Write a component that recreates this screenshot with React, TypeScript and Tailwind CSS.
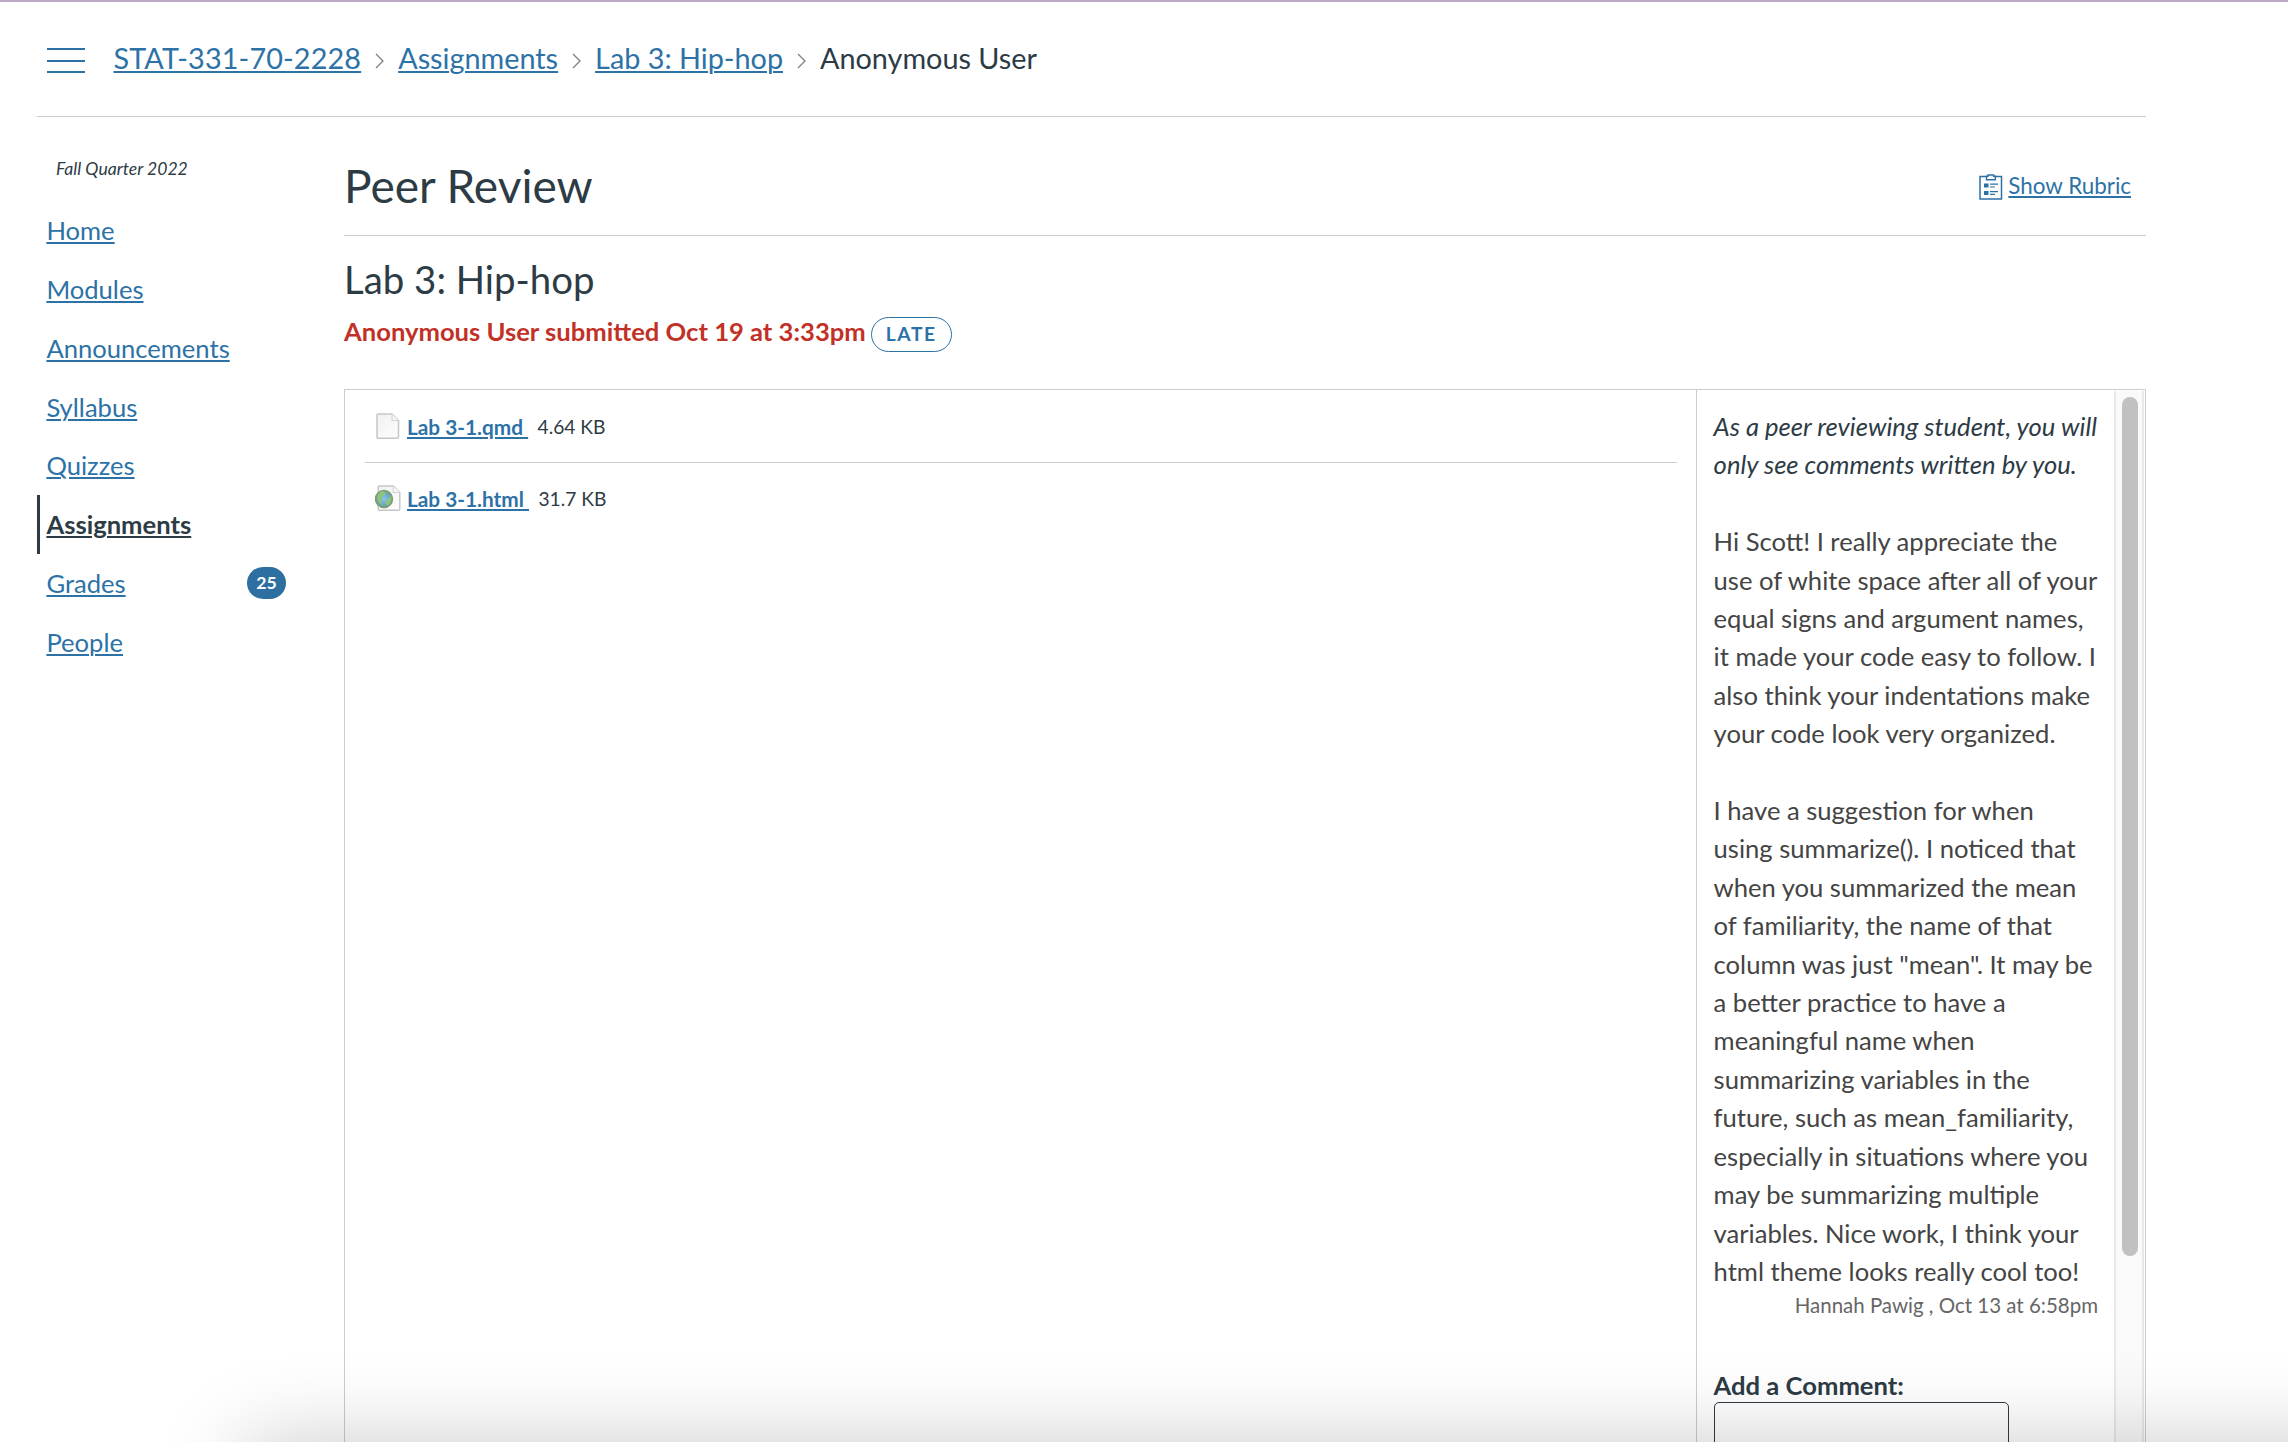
import type { ReactNode } from "react";

const navItems = ["Home", "Modules", "Announcements", "Syllabus", "Quizzes", "Assignments", "Grades", "People"];

const commentLines = [
  ["Hi Scott! I really appreciate the", "use of white space after all of your", "equal signs and argument names,", "it made your code easy to follow. I", "also think your indentations make", "your code look very organized."],
  ["I have a suggestion for when", "using summarize(). I noticed that", "when you summarized the mean", "of familiarity, the name of that", "column was just \"mean\". It may be", "a better practice to have a", "meaningful name when", "summarizing variables in the", "future, such as mean_familiarity,", "especially in situations where you", "may be summarizing multiple", "variables. Nice work, I think your", "html theme looks really cool too!"],
];

function Link({ children, className = "" }: { children: ReactNode; className?: string }) {
  return (
    <a href="#" className={`whitespace-pre underline decoration-2 underline-offset-[2px] ${className}`}>
      {children}
    </a>
  );
}

function Chevron() {
  return (
    <svg width="10" height="16" viewBox="0 0 10 16" fill="none" stroke="#7b8288" strokeWidth="1.3" className="mx-[13.5px] mt-[5px] shrink-0">
      <path d="M1 1l7 7L1 15" />
    </svg>
  );
}

function RubricIcon() {
  return (
    <svg width="24" height="26" viewBox="0 0 24 26" fill="none" stroke="#2d72a6" strokeWidth="1.5" className="shrink-0">
      <path d="M7.5 2.5H1V25H22.5V2.5H16" />
      <path d="M7.5 2.2H9V1h5.6v1.2h1.7v3.6H7.5z" />
      <path d="M5 9.5h4.5v4H5zM5 17h4.5v4H5z" fill="#2d72a6" stroke="none" />
      <path d="M11 10.2h8M11 13h5M11 17.6h8M11 20.4h5" strokeWidth="1.2" />
    </svg>
  );
}

function Page({ x }: { x: number }) {
  return (
    <g transform={`translate(${x} 0)`}>
      <path d="M1 2Q1 1 2 1H16L22.5 7.5V24Q22.5 25.3 21.3 25.3H2Q1 25.3 1 24Z" fill="url(#paper)" stroke="#c6c6c6" strokeWidth="1.5" />
      <path d="M16 1V7.5H22.5" fill="#f6f6f6" stroke="#d4d4d4" strokeWidth="1.2" />
    </g>
  );
}

function FileIcon({ html = false }: { html?: boolean }) {
  return (
    <svg width="26" height="27" viewBox="0 0 26 27" className="mb-[2px] mr-[6px] shrink-0">
      <defs>
        <linearGradient id="paper" x1="0" y1="0" x2="1" y2="1">
          <stop offset="0" stopColor="#f1f1f1" />
          <stop offset="1" stopColor="#fdfdfd" />
        </linearGradient>
        <radialGradient id="globe">
          <stop offset="0" stopColor="#8cc4f0" />
          <stop offset="0.65" stopColor="#6aa5cf" />
          <stop offset="1" stopColor="#75a267" />
        </radialGradient>
      </defs>
      <Page x={html ? 2.3 : 1} />
      {html && (
        <>
          <circle cx="9" cy="14" r="8.6" fill="url(#globe)" stroke="#7d9b70" strokeWidth="1.2" />
          <path d="M1.8 12Q4 6 9 6.3L11 8.5L7.5 11.5L6 17L8 20Q3 19 1.8 12ZM12 14L16 11Q17.5 17 13 20.5L10 19Z" fill="#8cc47c" />
        </>
      )}
    </svg>
  );
}

function FileRow({ name, size, html }: { name: string; size: string; html?: boolean }) {
  return (
    <div className="flex items-center pl-[10px]">
      <FileIcon html={html} />
      <Link className="text-[20.8px] font-bold text-[#2d72a6]">{name + " "}</Link>
      <span className="ml-[9.4px] text-[19.2px]">{size}</span>
    </div>
  );
}

export default function App() {
  return (
    <div className="relative h-[1442px] w-[2288px] overflow-hidden border-t-2 border-[#bdaac8] bg-white font-[Lato,sans-serif] text-[25.6px] leading-[38.4px] text-[#2d3b45]">
      <header className="ml-[37px] flex h-[115px] w-[2109px] items-center border-b border-[#c7cdd1] pb-[2px] pl-[10px] text-[28.8px]">
        <button className="mt-[5px] flex w-[38px] flex-col gap-[9.5px]" aria-label="Menu">
          <span className="h-[2px] bg-[#2d72a6]" />
          <span className="h-[2px] bg-[#2d72a6]" />
          <span className="h-[2px] bg-[#2d72a6]" />
        </button>
        <nav className="ml-[28.5px] flex items-center text-[#2d72a6]">
          <Link className="tracking-[0.12px]">STAT-331-70-2228</Link>
          <Chevron />
          <Link>Assignments</Link>
          <Chevron />
          <Link>Lab 3: Hip-hop</Link>
          <Chevron />
          <span className="text-[#2d3b45]">Anonymous User</span>
        </nav>
      </header>

      <div className="flex">
        <aside className="w-[344px] shrink-0 pl-[37px] pt-[33px]">
          <div className="pl-[19px] text-[17.6px] italic">Fall Quarter 2022</div>
          <ul className="mt-[12.7px]">
            {navItems.map((item) => (
              <li
                key={item}
                className={`flex h-[58.8px] w-[249px] items-center justify-between border-l-[3px] pl-[6.4px] ${item === "Assignments" ? "border-[#2d3b45] font-bold" : "border-transparent text-[#2d72a6]"}`}
              >
                <Link>{item}</Link>
                {item === "Grades" && (
                  <span className="flex h-8 w-[39px] items-center justify-center rounded-full bg-[#2d6fa1] text-[17.6px] font-bold text-white">25</span>
                )}
              </li>
            ))}
          </ul>
        </aside>

        <main className="w-[1802px]">
          <div className="flex h-[119px] items-center justify-between border-b border-[#c7cdd1] pr-[15px]">
            <h1 className="pt-[20px] text-[46px] leading-[60px]">Peer Review</h1>
            <div className="flex items-center gap-[5.5px] pt-[21px] text-[22.4px] text-[#2d72a6]">
              <RubricIcon />
              <Link>Show Rubric</Link>
            </div>
          </div>
          <h2 className="mt-[13.5px] text-[38.4px] leading-[58px]">Lab 3: Hip-hop</h2>
          <div className="mt-[3.5px] flex items-center font-bold text-[#c23127]">
            Anonymous User submitted Oct 19 at 3:33pm
            <span className="ml-[5px] mt-[6px] flex h-[35px] w-[81px] items-center justify-center rounded-full border border-[#2d72a6] text-[19.2px] tracking-[1.6px] text-[#2d72a6]">LATE</span>
          </div>

          <div className="mt-[37px] flex h-[1100px] border border-[#c7cdd1]">
            <section className="flex-1 pl-[20px] pr-[19px]">
              <div className="flex h-[73px] items-center border-b border-[#c7cdd1] pt-[2px]">
                <FileRow name="Lab 3-1.qmd" size="4.64 KB" />
              </div>
              <div className="flex h-[72px] items-center">
                <FileRow name="Lab 3-1.html" size="31.7 KB" html />
              </div>
            </section>
            <section className="w-[418px] border-l border-[#c7cdd1] pl-[16.6px] pt-[17px]">
              <p className="whitespace-nowrap italic">
                As a peer reviewing student, you will
                <br />
                only see comments written by you.
              </p>
              {commentLines.map((lines, i) => (
                <p key={i} className="mt-[38.4px] whitespace-nowrap text-[#444]">
                  {lines.map((line) => (
                    <span key={line} className="block">{line}</span>
                  ))}
                </p>
              ))}
              <div className="mr-[16px] text-right text-[20.48px] leading-[30px] text-[#666]">Hannah Pawig , Oct 13 at 6:58pm</div>
              <label className="mt-[46.3px] block font-bold leading-[36px]">Add a Comment:</label>
              <textarea className="-mt-px block h-[120px] w-[295px] resize-none rounded-[5px] border border-[#2d3b45] bg-white" />
            </section>
            <div className="mr-px mt-px w-[30px] border-x-2 border-[#e8e8e8] bg-[#fafafa] pl-[6px] pt-[6px]">
              <div className="h-[859px] w-4 rounded-full bg-[#c1c1c1]" />
            </div>
          </div>
        </main>
      </div>

      {/* Soft shadow cast by a window below the bottom edge */}
      <div className="pointer-events-none absolute -right-[200px] left-[242px] top-[1440px] h-[300px] rounded-[20px] shadow-[0_0_86px_rgba(0,0,0,0.21)]" />
    </div>
  );
}
